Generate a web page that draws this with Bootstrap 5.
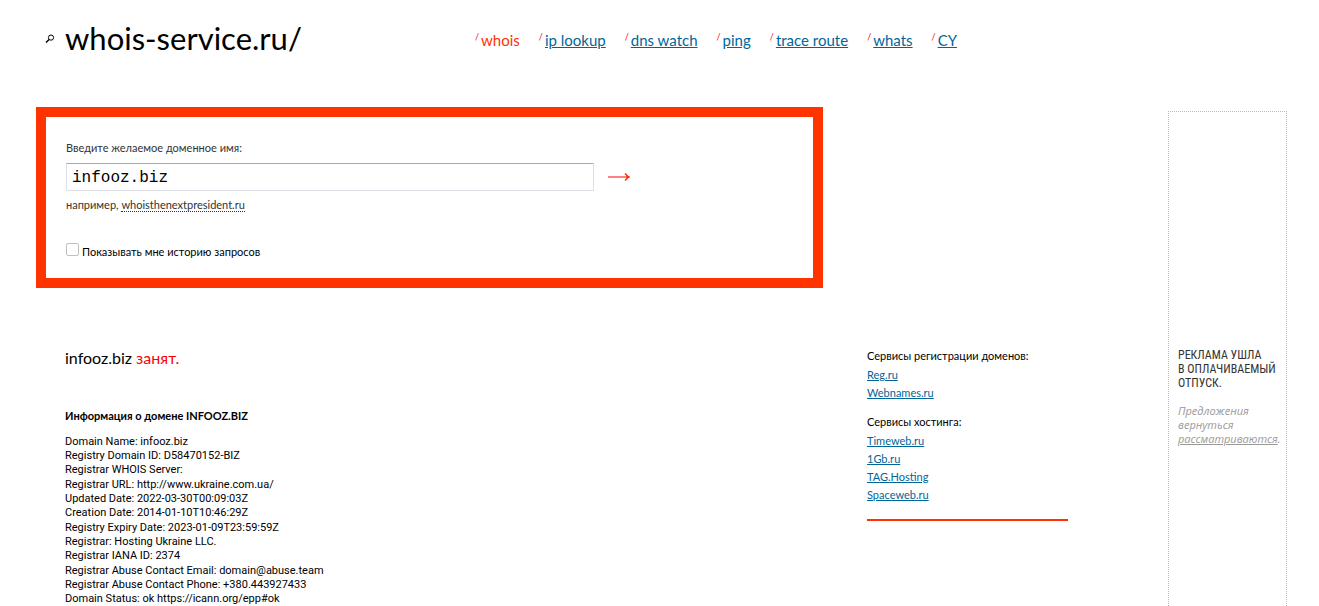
<!DOCTYPE html>
<html lang="ru">
<head>
<meta charset="utf-8">
<meta name="viewport" content="width=device-width, initial-scale=1">
<title>whois-service.ru</title>
<link href="https://cdn.jsdelivr.net/npm/bootstrap@5.3.0/dist/css/bootstrap.min.css" rel="stylesheet">
<style>
  :root { --accent: #ff3300; --ink-link: #006699; }
  body { font: 11px/1.3 Lato, "Open Sans", sans-serif; color: #000; background: #fff; }
  a { color: var(--ink-link); }
  .page { padding: 0 32px 0 36px; }

  .site-head { padding: 18px 0 49px 9px; }
  .brand { width: 430px; gap: 10px; }
  .brand-name { font-size: 31px; line-height: 40px; color: #000; }
  .site-nav { gap: 19px; font-size: 15px; line-height: 20px; }
  .site-nav li { display: flex; gap: 2px; }
  .site-nav li::before { content: "/"; font-size: 9px; line-height: 14px; color: red; }
  .site-nav .current { color: var(--accent); }

  .search-box { width: 76.25%; border: 10px solid var(--accent); padding: 24px 20px 19px; color: #333; }
  .search-row { gap: 14px; }
  .search-box .domain-input {
    width: 72.6%; height: 28px; padding: 2px 5px 0; border: 1px solid #dfdfe8; border-top-color: #a9a9a9;
    border-radius: 0; font: 16px "Liberation Mono", monospace; color: #000;
  }
  .go-btn { line-height: 0; }
  .example { margin-top: 7px; }
  .example-link { color: #333; text-decoration: none; border-bottom: 1px dotted #333; }
  .history-row { gap: 3px; margin-top: 30px; color: #000; }
  .history-row label { padding-top: 2px; }
  .history-row .form-check-input { width: 13px; height: 13px; border: 1px solid #c0c0c0; border-radius: 2px; }

  .results { padding-left: 29px; margin-top: 60px; }
  .verdict { font-size: 16px; line-height: 20px; margin-bottom: 41px; }
  .verdict span { color: red; }
  .record-title { font-size: 11px; line-height: 14px; margin-bottom: 12px; }
  .record { font-family: Roboto, sans-serif; padding-bottom: 8px; }

  .partners { width: 201px; border-bottom: 2px solid var(--accent); padding-bottom: 15px; }
  .partners h2 { font-size: 11px; line-height: 16px; font-weight: 400; margin: 0 0 2px; }
  .partners li { line-height: 18px; }
  .partners ul { margin-bottom: 12px; }

  .promo { width: 119px; margin-left: 100px; border: 1px dotted #bbb; border-bottom: 0; padding: 236px 0 0 9px; line-height: 14px; }
  .promo-lead { font: 12px/14px "Roboto Condensed", sans-serif; color: #333; margin-bottom: 14px; }
  .promo-note { font-family: "Open Sans", sans-serif; font-style: italic; color: #999; }
  .promo-note a { color: #999; }
</style>
</head>
<body>
<div class="page d-flex flex-column min-vh-100">
  <header class="site-head d-flex align-items-center">
    <a class="brand d-flex align-items-center text-decoration-none" href="#">
      <svg width="10" height="10" viewBox="0 0 10 10" fill="none" stroke="#000" stroke-width="1" aria-hidden="true">
        <circle cx="6" cy="4.6" r="2.6"/><path d="M4.1 6.6 1 9.6" stroke-width="1.4"/>
      </svg>
      <span class="brand-name">whois-service.ru/</span>
    </a>
    <nav aria-label="Сервисы">
      <ul class="site-nav list-unstyled d-flex flex-wrap pt-1 mb-0">
        <li><span class="current">whois</span></li>
        <li><a href="#">ip lookup</a></li>
        <li><a href="#">dns watch</a></li>
        <li><a href="#">ping</a></li>
        <li><a href="#">trace route</a></li>
        <li><a href="#">whats</a></li>
        <li><a href="#">CY</a></li>
      </ul>
    </nav>
  </header>

  <div class="d-flex flex-grow-1">
    <main class="flex-grow-1">
      <form class="search-box">
        <label for="domain" class="d-block mb-2">Введите желаемое доменное имя:</label>
        <div class="search-row d-flex align-items-center">
          <input id="domain" class="domain-input form-control" type="text" value="infooz.biz">
          <button class="go-btn btn p-0 border-0" type="submit" aria-label="Проверить">
            <svg width="22" height="10" viewBox="0 0 22 10" fill="none" stroke="#ff3300" aria-hidden="true">
              <path d="M0 5h20" stroke="#ff8080" stroke-width="2"/><path d="M17 1.500 20.500 5 17 8.500" stroke-width="1.500"/><path d="M18.500 5h3" stroke-width="2"/>
            </svg>
          </button>
        </div>
        <div class="example">например, <a class="example-link" href="#">whoisthenextpresident.ru</a></div>
        <div class="history-row d-flex align-items-start">
          <input id="history" class="form-check-input m-0 flex-shrink-0" type="checkbox">
          <label for="history">Показывать мне историю запросов</label>
        </div>
      </form>

      <div class="results d-flex justify-content-between">
        <section>
          <p class="verdict">infooz.biz <span>занят.</span></p>
          <h1 class="record-title fw-bold">Информация о домене INFOOZ.BIZ</h1>
          <div class="record">
            Domain Name: infooz.biz<br>
            Registry Domain ID: D58470152-BIZ<br>
            Registrar WHOIS Server:<br>
            Registrar URL: http://www.ukraine.com.ua/<br>
            Updated Date: 2022-03-30T00:09:03Z<br>
            Creation Date: 2014-01-10T10:46:29Z<br>
            Registry Expiry Date: 2023-01-09T23:59:59Z<br>
            Registrar: Hosting Ukraine LLC.<br>
            Registrar IANA ID: 2374<br>
            Registrar Abuse Contact Email: domain@abuse.team<br>
            Registrar Abuse Contact Phone: +380.443927433<br>
            Domain Status: ok https://icann.org/epp#ok
          </div>
        </section>
        <aside class="partners align-self-start">
          <h2>Сервисы регистрации доменов:</h2>
          <ul class="list-unstyled">
            <li><a href="#">Reg.ru</a></li>
            <li><a href="#">Webnames.ru</a></li>
          </ul>
          <h2>Сервисы хостинга:</h2>
          <ul class="list-unstyled mb-0">
            <li><a href="#">Timeweb.ru</a></li>
            <li><a href="#">1Gb.ru</a></li>
            <li><a href="#">TAG.Hosting</a></li>
            <li><a href="#">Spaceweb.ru</a></li>
          </ul>
        </aside>
      </div>
    </main>
    <aside class="promo flex-shrink-0 mt-1">
      <p class="promo-lead">РЕКЛАМА УШЛА<br>В ОПЛАЧИВАЕМЫЙ<br>ОТПУСК.</p>
      <p class="promo-note mb-0">Предложения вернуться <a href="#">рассматриваются</a>.</p>
    </aside>
  </div>
</div>
<script src="https://cdn.jsdelivr.net/npm/bootstrap@5.3.0/dist/js/bootstrap.bundle.min.js"></script>
</body>
</html>
